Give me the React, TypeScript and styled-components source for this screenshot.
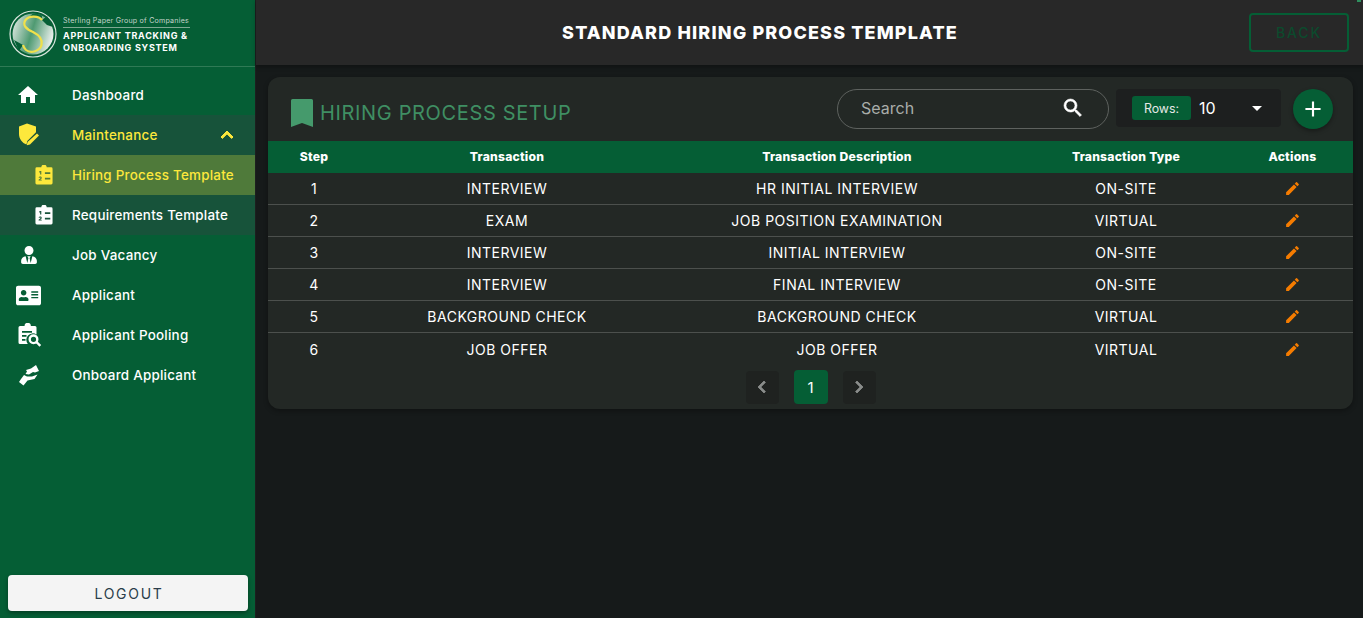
import React from 'react';
import styled, { createGlobalStyle } from 'styled-components';
import { FaUserTie, FaAddressCard } from 'react-icons/fa';
import { MdHome, MdEdit, MdSearch, MdAdd, MdArrowDropDown, MdChevronLeft, MdChevronRight, MdExpandLess } from 'react-icons/md';

const GlobalStyle = createGlobalStyle`
  html, body { margin: 0; padding: 0; height: 100%; background: #161a1a; }
  #root { height: 100%; }
  * { box-sizing: border-box; }
  body { font-family: Inter, "Liberation Sans", sans-serif; color: #fff; }
  svg path[fill='none'] { stroke: none; }
`;

const Page = styled.div`
  display: flex;
  width: 100%;
  height: 618px;
  overflow: hidden;
`;

const Sidebar = styled.aside`
  width: 256px;
  flex: none;
  display: flex;
  flex-direction: column;
  background: #055e35;
  border-right: 1px solid #1d1f1f;
`;

const Brand = styled.div`
  height: 67px;
  flex: none;
  display: flex;
  align-items: center;
  gap: 6px;
  padding: 1px 0 0 9px;
  border-bottom: 1px solid #2f7a55;
`;

const BrandText = styled.div`
  display: flex;
  flex-direction: column;
  padding-top: 3px;
`;

const Company = styled.div`
  font-size: 7.1px;
  line-height: 9px;
  letter-spacing: 0.22px;
  color: #c4d4cb;
  padding-bottom: 2px;
  border-bottom: 1px solid #7fa892;
  margin-bottom: 2px;
  width: 127px;
  white-space: nowrap;
`;

const SystemName = styled.div`
  font-size: 9px;
  line-height: 12px;
  font-weight: 700;
  letter-spacing: 0.75px;
  white-space: nowrap;
`;

const Nav = styled.nav`
  display: flex;
  flex-direction: column;
  padding-top: 8px;
  flex: 1;
`;

const Group = styled.div`
  background: #17533a;
`;

const NavItem = styled.div<{ $active?: boolean; $open?: boolean }>`
  height: 40px;
  display: flex;
  align-items: center;
  position: relative;
  font-size: 13.4px;
  font-weight: 500;
  letter-spacing: 0.25px;
  white-space: nowrap;
  color: ${({ $active, $open }) => ($active || $open ? '#fde83c' : '#fff')};
  background: ${({ $active }) => ($active ? '#4f7a3a' : 'transparent')};
`;

const IconSlot = styled.span<{ $sub?: boolean }>`
  width: 72px;
  flex: none;
  display: flex;
  align-items: center;
  justify-content: flex-start;
  padding-left: ${({ $sub }) => ($sub ? '35px' : '16px')};
  svg { display: block; }
`;

const Caret = styled.span`
  position: absolute;
  right: 16px;
  top: 8px;
  display: flex;
`;

const LogoutWrap = styled.div`
  padding: 0 7px 7px 8px;
`;

const LogoutButton = styled.button`
  width: 100%;
  height: 36px;
  border: none;
  border-radius: 4px;
  background: #f4f4f4;
  color: #2a3d4a;
  font: 400 14px Inter, "Liberation Sans", sans-serif;
  letter-spacing: 1.7px;
  padding-left: 8px;
  box-shadow: 0 2px 4px rgba(0, 0, 0, 0.35);
`;

const Main = styled.main`
  flex: 1;
  min-width: 0;
  display: flex;
  flex-direction: column;
`;

const TopBar = styled.header`
  height: 65px;
  flex: none;
  display: grid;
  grid-template-columns: 1fr auto;
  align-items: center;
  padding: 0 14px 0 0;
  background: #282828;
  box-shadow: 0 2px 4px rgba(0, 0, 0, 0.3);
  position: relative;
  &::after {
    content: '';
    position: absolute;
    top: 0;
    right: 2px;
    width: 4px;
    height: 2px;
    background: #2f8f5f;
  }
`;

const PageTitle = styled.h1`
  margin: 0;
  text-align: center;
  font-size: 18px;
  font-weight: 800;
  letter-spacing: 1.15px;
  padding-left: 15px;
`;

const BackButton = styled.button`
  width: 100px;
  height: 39px;
  border: 2px solid #055e35;
  border-radius: 4px;
  background: transparent;
  color: #0c4a2d;
  font: 500 14px Inter, "Liberation Sans", sans-serif;
  letter-spacing: 1.9px;
`;

const Content = styled.div`
  padding: 12px 10px 0 12px;
`;

const Card = styled.section`
  height: 332px;
  background: #232825;
  border-radius: 12px;
  box-shadow: 0 2px 5px rgba(0, 0, 0, 0.3);
  display: flex;
  flex-direction: column;
  overflow: hidden;
`;

const CardHead = styled.div`
  height: 64px;
  flex: none;
  display: flex;
  align-items: center;
  padding: 0 20px 0 23px;
`;

const CardTitle = styled.h2`
  flex: 1;
  display: flex;
  align-items: center;
  gap: 7px;
  margin: 8px 0 0;
  color: #3f8f63;
  font-size: 20px;
  font-weight: 400;
  letter-spacing: 0.65px;
  svg { display: block; }
`;

const Bookmark = styled.svg`
  width: 22px;
  height: 28px;
`;

const SearchBox = styled.div`
  width: 272px;
  height: 40px;
  display: flex;
  align-items: center;
  justify-content: space-between;
  padding: 0 23px 2px 23px;
  border: 1.5px solid #5e625f;
  border-radius: 20px;
  margin-right: 7px;
  font-size: 16px;
  color: #a9adaa;
  svg { stroke-width: 0.6; }
`;

const RowsBox = styled.div`
  width: 165px;
  height: 38px;
  display: flex;
  align-items: center;
  padding-left: 16px;
  margin: 0 12px 2px 0;
  border-radius: 4px;
  background: #1d1f1f;
  font-size: 16px;
  position: relative;
`;

const RowsTag = styled.span`
  width: 59px;
  height: 24px;
  display: flex;
  align-items: center;
  justify-content: center;
  margin-right: 8px;
  border-radius: 3px;
  background: #055e35;
  font-size: 12.4px;
  color: #e4e8e5;
`;

const DropArrow = styled.span`
  position: absolute;
  right: 12px;
  top: 7px;
  display: flex;
`;

const AddButton = styled.button`
  width: 40px;
  height: 40px;
  display: flex;
  align-items: center;
  justify-content: center;
  padding: 0;
  border: none;
  border-radius: 50%;
  background: #055e35;
  color: #fff;
  box-shadow: 0 2px 4px rgba(0, 0, 0, 0.35);
`;

const Row = styled.div<{ $head?: boolean; $last?: boolean }>`
  display: grid;
  grid-template-columns: 92px 294px 366px 212px 121px;
  align-items: center;
  height: 32px;
  flex: none;
  text-align: center;
  font-size: 14px;
  letter-spacing: 0.5px;
  font-weight: 400;
  ${({ $head }) => $head && 'font-size: 12.2px; font-weight: 800; letter-spacing: 0.2px; padding-bottom: 2px; background: #055e35;'}
  ${({ $head, $last }) => !$head && !$last && 'border-bottom: 1px solid #4c504d;'}
`;

const EditCell = styled.span`
  display: flex;
  justify-content: center;
  color: #f57c00;
`;

const Pager = styled.div`
  display: flex;
  justify-content: center;
  gap: 15px;
  align-items: center;
  padding-top: 5px;
`;

const PageArrow = styled.span`
  width: 33px;
  height: 33px;
  display: flex;
  align-items: center;
  justify-content: center;
  border-radius: 4px;
  background: #1f2220;
  color: #8a8d8b;
  svg { stroke-width: 0.8; }
`;

const PageNumber = styled.span`
  width: 34px;
  height: 34px;
  display: flex;
  align-items: center;
  justify-content: center;
  border-radius: 4px;
  background: #055e35;
  font-size: 15px;
`;

const ShieldIcon = ({ color }: { color: string }) => (
  <svg width="24" height="24" viewBox="0 0 24 24" fill={color}>
    <path d="M11 .5 3 3.500V11c0 5 3.300 9 7.500 10.500l.8-3.500 8.700-8.700V3.500z" />
    <path d="M21 10.500l2 2-9 9-3.200.7.700-3.200z" />
  </svg>
);

const ListClipboard = ({ color, ink }: { color: string; ink: string }) => (
  <svg width="18" height="20" viewBox="0 0 20 22">
    <path fill={color} d="M7 2.500a3 3 0 0 1 6 0h5a1.500 1.500 0 0 1 1.500 1.500v16a1.500 1.500 0 0 1-1.500 1.500H2A1.500 1.500 0 0 1 .5 20V4A1.500 1.500 0 0 1 2 2.500z" />
    <path fill={ink} d="M11 8h6v2h-6zM11 14h6v2h-6zM4.500 7l1.500-.5h1v4H5.700V8L4.500 8.200zM4 13.500c.5-1 3.500-1.200 3.500.7 0 1-1.200 1.500-2 2h2v1H4v-1c1-.8 2.200-1.400 2.200-2.100 0-.6-1.200-.5-1.600.1z" />
  </svg>
);

const PoolingIcon = () => (
  <svg width="24" height="24" viewBox="0 0 24 24" style={{ marginLeft: 2 }}>
    <path fill="#fff" d="M6.500 3a3.200 3.200 0 0 1 6.400 0h4.100A1.500 1.500 0 0 1 18.500 4.500v7a6.500 6.500 0 0 0-8.700 9.500H2A1.500 1.500 0 0 1 .5 19.500v-15A1.500 1.500 0 0 1 2 3z" />
    <path fill="#055e35" d="M4 8h10v1.800H4zM4 12h4.500v1.800H4zM4 16h3.500v1.800H4z" />
    <path fill="transparent" stroke="#fff" strokeWidth="2.400" d="M15.500 12.500a3.800 3.800 0 1 0 0 7.600 3.800 3.800 0 0 0 0-7.600zM18.500 19l3.800 3.800" />
  </svg>
);

const OnboardIcon = () => (
  <svg width="22" height="22" viewBox="0 0 22 22" style={{ marginLeft: 2 }}>
    <path fill="#fff" d="M8 6l5-1.500L18 1l3 6-4 1.500-2-.5-4 2.500-3.500-.5 1.500-2.500z" />
    <path fill="#fff" d="M1 18l2-3 3-4 3 1.500h5l5.500-2-3 4.500-7 1.500-4 5z" />
  </svg>
);

const LogoMark = () => (
  <svg width="48" height="48" viewBox="0 0 48 48">
    <defs>
      <linearGradient id="ball" x1="0" y1="0.200" x2="1" y2="0.500">
        <stop offset="0" stopColor="#dfe8e2" />
        <stop offset="0.500" stopColor="#4f9a72" />
        <stop offset="1" stopColor="#e8eeea" />
      </linearGradient>
    </defs>
    <circle cx="24" cy="24" r="23" fill="#055e35" stroke="#d9e5dd" strokeWidth="1.200" />
    <circle cx="24" cy="24" r="20.500" fill="url(#ball)" />
    <path fill="#055e35" d="M33 10 38 15 44 17 38 6zM14 35 5 30 10 41z" />
    <path fill="#0c6a3e" d="M24 3.500a20.500 20.500 0 0 1 9 2L33 10C30 6 20 5 16.500 10z" />
    <path fill="transparent" stroke="#f0e04a" strokeWidth="2.200" d="M33 10C30 6 20 5 16.500 10 13 15 17 19 24 22c6 3 10 7 8.500 13-1.500 6-10.500 9-15.500 5-1.500-1.500-2.500-3-3-5" />
  </svg>
);

const rows = [
  ['1', 'INTERVIEW', 'HR INITIAL INTERVIEW', 'ON-SITE'],
  ['2', 'EXAM', 'JOB POSITION EXAMINATION', 'VIRTUAL'],
  ['3', 'INTERVIEW', 'INITIAL INTERVIEW', 'ON-SITE'],
  ['4', 'INTERVIEW', 'FINAL INTERVIEW', 'ON-SITE'],
  ['5', 'BACKGROUND CHECK', 'BACKGROUND CHECK', 'VIRTUAL'],
  ['6', 'JOB OFFER', 'JOB OFFER', 'VIRTUAL'],
];

export default function App() {
  return (
    <Page>
      <GlobalStyle />
      <Sidebar>
        <Brand>
          <LogoMark />
          <BrandText>
            <Company>Sterling Paper Group of Companies</Company>
            <SystemName>APPLICANT TRACKING &amp;</SystemName>
            <SystemName>ONBOARDING SYSTEM</SystemName>
          </BrandText>
        </Brand>
        <Nav>
          <NavItem>
            <IconSlot><MdHome size={24} /></IconSlot>
            Dashboard
          </NavItem>
          <Group>
            <NavItem $open>
              <IconSlot><ShieldIcon color="#fde83c" /></IconSlot>
              Maintenance
              <Caret><MdExpandLess size={24} stroke="currentColor" strokeWidth={1} /></Caret>
            </NavItem>
            <NavItem $active>
              <IconSlot $sub><ListClipboard color="#fde83c" ink="#4f7a3a" /></IconSlot>
              Hiring Process Template
            </NavItem>
            <NavItem>
              <IconSlot $sub><ListClipboard color="#fff" ink="#17533a" /></IconSlot>
              Requirements Template
            </NavItem>
          </Group>
          <NavItem>
            <IconSlot><FaUserTie size={18} style={{ marginLeft: 4 }} /></IconSlot>
            Job Vacancy
          </NavItem>
          <NavItem>
            <IconSlot><FaAddressCard size={25} /></IconSlot>
            Applicant
          </NavItem>
          <NavItem>
            <IconSlot><PoolingIcon /></IconSlot>
            Applicant Pooling
          </NavItem>
          <NavItem>
            <IconSlot><OnboardIcon /></IconSlot>
            Onboard Applicant
          </NavItem>
        </Nav>
        <LogoutWrap>
          <LogoutButton>LOGOUT</LogoutButton>
        </LogoutWrap>
      </Sidebar>
      <Main>
        <TopBar>
          <PageTitle>STANDARD HIRING PROCESS TEMPLATE</PageTitle>
          <BackButton>BACK</BackButton>
        </TopBar>
        <Content>
          <Card>
            <CardHead>
              <CardTitle>
                <Bookmark viewBox="0 0 22 28">
                  <path fill="#459a6c" d="M1.500 0h19A1.500 1.500 0 0 1 22 1.500V28l-11-4-11 4V1.500A1.500 1.500 0 0 1 1.500 0z" />
                </Bookmark>
                HIRING PROCESS SETUP
              </CardTitle>
              <SearchBox>
                Search
                <MdSearch size={24} color="#fff" stroke="#fff" />
              </SearchBox>
              <RowsBox>
                <RowsTag>Rows:</RowsTag>
                10
                <DropArrow><MdArrowDropDown size={24} /></DropArrow>
              </RowsBox>
              <AddButton><MdAdd size={26} /></AddButton>
            </CardHead>
            <Row $head>
              <span>Step</span>
              <span>Transaction</span>
              <span>Transaction Description</span>
              <span>Transaction Type</span>
              <span>Actions</span>
            </Row>
            {rows.map((row, i) => (
              <Row key={row[0]} $last={i === rows.length - 1}>
                {row.map((cell) => (
                  <span key={cell}>{cell}</span>
                ))}
                <EditCell><MdEdit size={17} /></EditCell>
              </Row>
            ))}
            <Pager>
              <PageArrow><MdChevronLeft size={24} stroke="currentColor" /></PageArrow>
              <PageNumber>1</PageNumber>
              <PageArrow><MdChevronRight size={24} stroke="currentColor" /></PageArrow>
            </Pager>
          </Card>
        </Content>
      </Main>
    </Page>
  );
}
